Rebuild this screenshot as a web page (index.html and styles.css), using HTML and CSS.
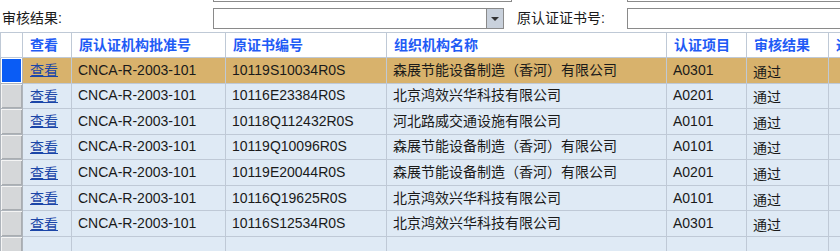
FILE: index.html
```html
<!DOCTYPE html>
<html lang="zh-CN">

<head>
    <meta charset="UTF-8">
    <title>审核结果查询</title>
    <link rel="stylesheet" href="styles.css">
</head>

<body>
    <div class="filters">
        <span></span>
        <input type="text" class="text-box wide">
        <span></span>
        <input type="text" class="text-box">

        <label class="filter-label">审核结果:</label>
        <div class="select-box">
            <span class="select-value"></span>
            <span class="select-btn"><span class="arrow"></span></span>
        </div>
        <label class="filter-label">原认证证书号:</label>
        <input type="text" class="text-box">
    </div>

    <table class="grid">
        <colgroup>
            <col style="width: 22px">
            <col style="width: 49px">
            <col style="width: 154px">
            <col style="width: 161px">
            <col style="width: 280px">
            <col style="width: 80px">
            <col style="width: 82px">
            <col style="width: 120px">
        </colgroup>
        <thead>
            <tr>
                <th class="row-head"></th>
                <th>查看</th>
                <th>原认证机构批准号</th>
                <th>原证书编号</th>
                <th>组织机构名称</th>
                <th>认证项目</th>
                <th>审核结果</th>
                <th>通过日期</th>
            </tr>
        </thead>
        <tbody>
            <tr class="selected">
                <td class="row-head"></td>
                <td><a href="#">查看</a></td>
                <td>CNCA-R-2003-101</td>
                <td>10119S10034R0S</td>
                <td>森展节能设备制造（香河）有限公司</td>
                <td>A0301</td>
                <td class="result">通过</td>
                <td></td>
            </tr>
            <tr>
                <td class="row-head"></td>
                <td><a href="#">查看</a></td>
                <td>CNCA-R-2003-101</td>
                <td>10116E23384R0S</td>
                <td>北京鸿效兴华科技有限公司</td>
                <td>A0201</td>
                <td class="result">通过</td>
                <td></td>
            </tr>
            <tr>
                <td class="row-head"></td>
                <td><a href="#">查看</a></td>
                <td>CNCA-R-2003-101</td>
                <td>10118Q112432R0S</td>
                <td>河北路威交通设施有限公司</td>
                <td>A0101</td>
                <td class="result">通过</td>
                <td></td>
            </tr>
            <tr>
                <td class="row-head"></td>
                <td><a href="#">查看</a></td>
                <td>CNCA-R-2003-101</td>
                <td>10119Q10096R0S</td>
                <td>森展节能设备制造（香河）有限公司</td>
                <td>A0101</td>
                <td class="result">通过</td>
                <td></td>
            </tr>
            <tr>
                <td class="row-head"></td>
                <td><a href="#">查看</a></td>
                <td>CNCA-R-2003-101</td>
                <td>10119E20044R0S</td>
                <td>森展节能设备制造（香河）有限公司</td>
                <td>A0201</td>
                <td class="result">通过</td>
                <td></td>
            </tr>
            <tr>
                <td class="row-head"></td>
                <td><a href="#">查看</a></td>
                <td>CNCA-R-2003-101</td>
                <td>10116Q19625R0S</td>
                <td>北京鸿效兴华科技有限公司</td>
                <td>A0101</td>
                <td class="result">通过</td>
                <td></td>
            </tr>
            <tr>
                <td class="row-head"></td>
                <td><a href="#">查看</a></td>
                <td>CNCA-R-2003-101</td>
                <td>10116S12534R0S</td>
                <td>北京鸿效兴华科技有限公司</td>
                <td>A0301</td>
                <td class="result">通过</td>
                <td></td>
            </tr>
            <tr class="empty">
                <td class="row-head"></td>
                <td></td>
                <td></td>
                <td></td>
                <td></td>
                <td></td>
                <td></td>
                <td></td>
            </tr>
        </tbody>
    </table>
</body>

</html>
```

FILE: styles.css
```css
body {
    margin: 0;
    font-family: "Liberation Sans", Arial, "Noto Sans CJK SC", sans-serif;
    font-size: 14px;
    color: #1a1a1a;
    background-color: #ffffff;
    overflow: hidden;
}

.filters {
    display: grid;
    grid-template-columns: 213px 300px 114px 240px;
    grid-auto-rows: 21px;
    row-gap: 6px;
    margin-top: -19px;
    align-items: center;
}

.filter-label {
    padding-left: 2px;
    line-height: 21px;
    color: #1a1a1a;
}

.filters .filter-label:nth-of-type(2) {
    padding-left: 4px;
}

.text-box {
    box-sizing: border-box;
    height: 21px;
    width: 100%;
    margin: 0;
    border: 1px solid #8a8a8a;
    background-color: #ffffff;
}

.text-box.wide {
    width: 299px;
}

.select-box {
    box-sizing: border-box;
    display: flex;
    width: 291px;
    height: 21px;
    border: 1px solid #8a8a8a;
    background-color: #ffffff;
}

.select-value {
    flex: 1;
}

.select-btn {
    width: 16px;
    display: flex;
    align-items: center;
    justify-content: center;
    background-color: #c9d1dc;
    border-left: 1px solid #8a8a8a;
}

.arrow {
    width: 0;
    height: 0;
    border-left: 4px solid transparent;
    border-right: 4px solid transparent;
    border-top: 4px solid #333333;
}

.grid {
    margin-top: 3px;
    border-collapse: collapse;
    table-layout: fixed;
    width: 948px;
}

.grid tr {
    height: 25.57px;
}

.grid thead tr {
    height: 25px;
}

.grid th,
.grid td {
    border: 1px solid #bfc9d6;
    padding: 0 0 0 6px;
    line-height: 14px;
    text-align: left;
    vertical-align: middle;
    white-space: nowrap;
    overflow: hidden;
}

.grid th {
    background-color: #ffffff;
    color: #1f5bf5;
    font-weight: bold;
    padding-left: 7px;
}

.grid td {
    background-color: #dfeaf5;
    padding-bottom: 1px;
}

.grid td:nth-child(2) {
    padding-left: 7px;
    padding-bottom: 0;
}

.grid td.result {
    padding-top: 3px;
    padding-bottom: 0;
}

.grid tr.selected td {
    background-color: #d8b26c;
}

.grid th.row-head {
    background-color: #ffffff;
}

.grid td.row-head {
    padding: 0;
    background-color: #d5d7d9;
    border-color: #aeb4bb;
    box-shadow: inset 1px 1px 0 #f4f4f4, inset -1px -1px 0 #a9adb1;
}

.grid tr.selected td.row-head {
    background-color: #0a5cf5;
    box-shadow: inset 1px 1px 0 #ffffff, inset -1px -1px 0 #ffffff;
}

.grid a {
    color: #1b46a8;
    text-decoration: underline;
}
```
